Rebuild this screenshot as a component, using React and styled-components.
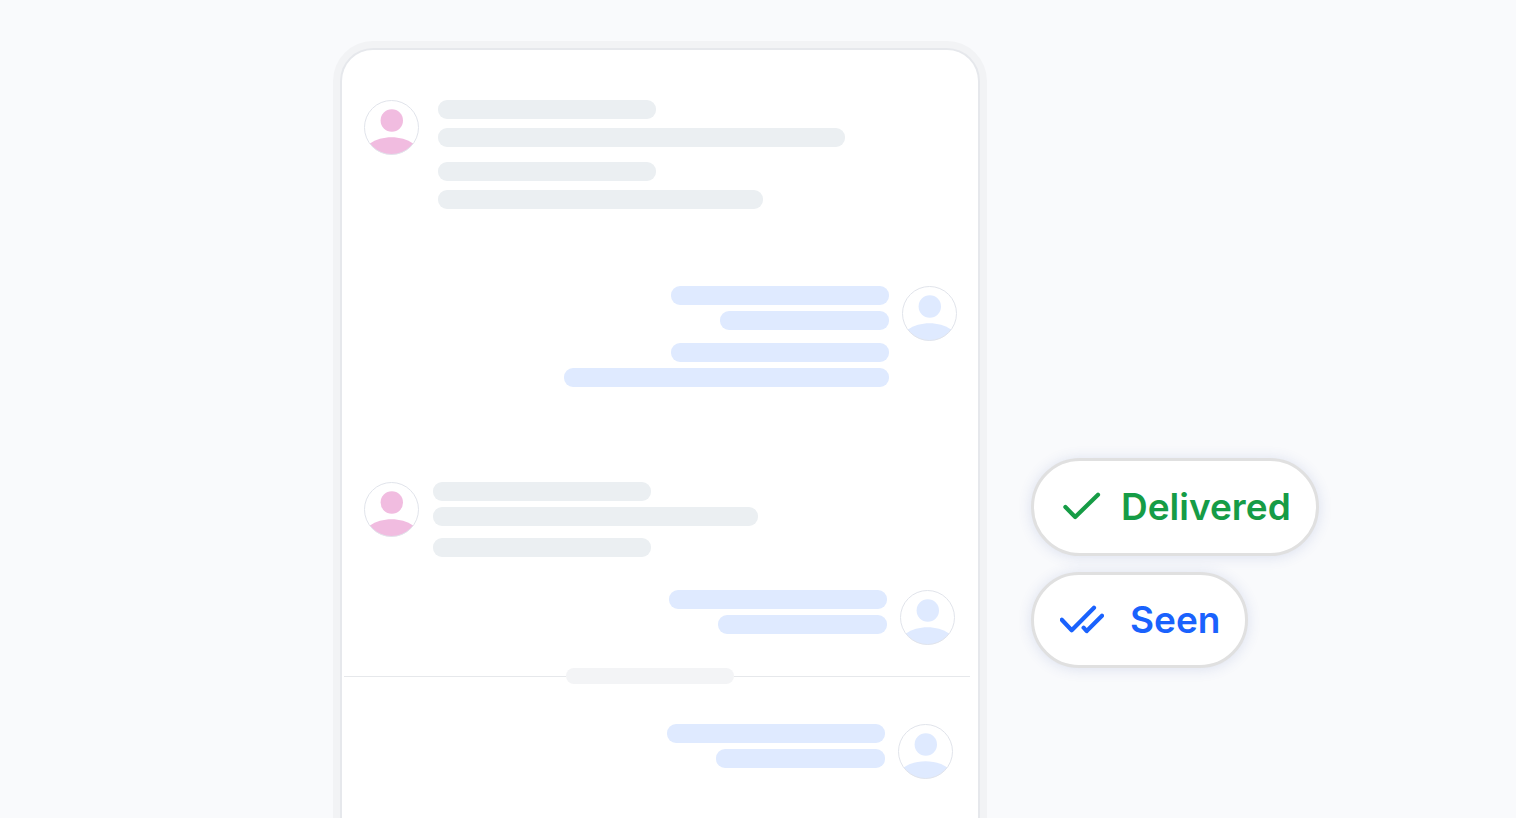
import React from 'react';
import styled, { createGlobalStyle } from 'styled-components';

const colors = {
  page: '#f9fafc',
  frame: '#f2f3f5',
  frameLine: '#e6e8ec',
  incoming: '#ebeff2',
  outgoing: '#dfeaff',
  pink: '#f1bce0',
  delivered: '#169c46',
  seen: '#1a62fd',
};

// Bars are grouped in paragraphs, each number is a bar width.
const messages = [
  { top: 50, inset: 22, gutter: 19, line: 9, para: 15, groups: [[218, 407], [218, 325]] },
  { own: true, top: 77, inset: 21, gutter: 13, line: 6, para: 13, groups: [[218, 169], [218, 325]] },
  { top: 95, inset: 22, gutter: 14, line: 6, para: 12, groups: [[218, 325], [218]] },
  { own: true, top: 33, inset: 23, gutter: 13, line: 6, groups: [[218, 169]] },
];

const laterMessages = [
  { own: true, top: 40, inset: 25, gutter: 13, line: 6, groups: [[218, 169]] },
];

const Avatar = ({ color }) => (
  <AvatarSvg viewBox="0 0 55 55" aria-hidden="true">
    <circle cx="27.8" cy="20.5" r="11.2" fill={color} />
    <path d="M5.6 43.5 C18 35 37 35 49.4 43.5 A27 27 0 0 1 5.6 43.5 Z" fill={color} />
    <circle cx="27.5" cy="27.5" r="27" fill="none" stroke="#e1e4eb" />
  </AvatarSvg>
);

const Message = ({ own, top, inset, gutter, line, para, groups }) => (
  <MessageRow $own={own} $top={top} $inset={inset} $gutter={gutter}>
    <Avatar color={own ? colors.outgoing : colors.pink} />
    <Paragraphs $gap={para}>
      {groups.map((bars, i) => (
        <Lines key={i} $gap={line} $own={own}>
          {bars.map((width, j) => (
            <Bar key={j} $width={width} $own={own} />
          ))}
        </Lines>
      ))}
    </Paragraphs>
  </MessageRow>
);

const App = () => (
  <>
    <GlobalStyle />
    <Page>
      <Frame>
        <Conversation>
          {messages.map((message, i) => (
            <Message key={i} {...message} />
          ))}
          <Divider>
            <DividerLabel />
          </Divider>
          {laterMessages.map((message, i) => (
            <Message key={i} {...message} />
          ))}
        </Conversation>
      </Frame>
      <Statuses>
        <Status $color={colors.delivered} $gap={17} $pad={22}>
          <CheckSvg viewBox="0 0 44 32" aria-hidden="true">
            <path d="M5.4 16.1 L15.2 26 L38 3.7" />
          </CheckSvg>
          Delivered
        </Status>
        <Status $color={colors.seen} $gap={26} $pad={21}>
          <CheckSvg viewBox="0 0 44 32" aria-hidden="true">
            <path d="M1.8 15.7 L11.7 26.2 L34 3.7" />
            <path d="M23.6 23.7 L26.7 27.1 L42 11.7" />
          </CheckSvg>
          Seen
        </Status>
      </Statuses>
    </Page>
  </>
);

const GlobalStyle = createGlobalStyle`
  * {
    box-sizing: border-box;
  }

  body {
    margin: 0;
    background: ${colors.page};
    font-family: Inter, 'Liberation Sans', sans-serif;
  }
`;

const Page = styled.main`
  display: flex;
  justify-content: center;
  gap: 44px;
  min-height: 100vh;
  padding: 41px 0 0 136px;
  overflow: hidden;
`;

const Frame = styled.section`
  display: flex;
  flex: 0 1 654px;
  min-width: 0;
  padding: 7px 7px 0;
  border-radius: 40px 40px 0 0;
  background: ${colors.frame};
`;

const Conversation = styled.div`
  flex: 1;
  min-width: 0;
  border: 2px solid ${colors.frameLine};
  border-bottom: 0;
  border-radius: 33px 33px 0 0;
  background: #fff;
`;

const MessageRow = styled.div`
  display: flex;
  flex-direction: ${({ $own }) => ($own ? 'row-reverse' : 'row')};
  align-items: flex-start;
  gap: ${({ $gutter }) => $gutter}px;
  padding: ${({ $top, $inset }) => `${$top}px ${$inset}px 0`};
`;

const AvatarSvg = styled.svg`
  flex: none;
  width: 55px;
  height: 55px;
`;

const Paragraphs = styled.div`
  display: flex;
  flex: 1;
  flex-direction: column;
  gap: ${({ $gap = 0 }) => $gap}px;
  min-width: 0;
`;

const Lines = styled.div`
  display: flex;
  flex-direction: column;
  align-items: ${({ $own }) => ($own ? 'flex-end' : 'flex-start')};
  gap: ${({ $gap }) => $gap}px;
`;

const Bar = styled.div`
  width: ${({ $width }) => $width}px;
  max-width: 100%;
  height: 19px;
  border-radius: 9px;
  background: ${({ $own }) => ($own ? colors.outgoing : colors.incoming)};
`;

const Divider = styled.div`
  display: flex;
  align-items: center;
  margin: 23px 8px 0 2px;

  &::before,
  &::after {
    content: '';
    height: 1px;
    background: #e6e8eb;
  }

  &::before {
    flex: 222;
  }

  &::after {
    flex: 236;
  }
`;

const DividerLabel = styled.span`
  width: 168px;
  height: 16px;
  border-radius: 8px;
  background: #f3f4f6;
`;

const Statuses = styled.div`
  display: flex;
  flex: 0 0 288px;
  flex-direction: column;
  align-items: flex-start;
  gap: 16px;
  padding-top: 417px;
`;

const Status = styled.div`
  display: flex;
  align-items: center;
  gap: ${({ $gap }) => $gap}px;
  padding: ${({ $pad }) => $pad}px 25px ${({ $pad }) => $pad}px 26px;
  border: 3px solid #e0e0e0;
  border-radius: 49px;
  background: #fff;
  box-shadow: 0 1px 14px rgba(60, 90, 170, 0.16);
  color: ${({ $color }) => $color};
  font-size: 37px;
  font-weight: 600;
  line-height: 48px;
  white-space: nowrap;
`;

const CheckSvg = styled.svg`
  flex: none;
  width: 44px;
  height: 32px;
  fill: none;
  stroke: currentColor;
  stroke-width: 4.2;
  stroke-linecap: round;
  stroke-linejoin: round;
`;

export default App;
